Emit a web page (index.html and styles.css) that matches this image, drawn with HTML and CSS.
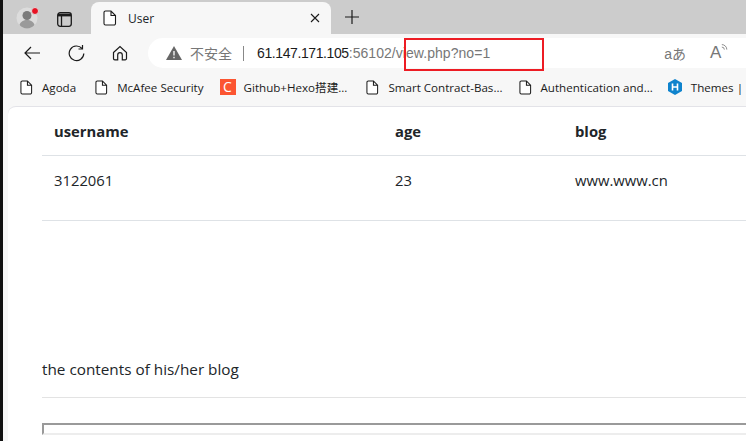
FILE: index.html
```html
<!DOCTYPE html>
<html lang="zh-cn">
<head>
    <meta charset="UTF-8">
    <title>User</title>
    <link rel="stylesheet" href="styles.css">
</head>
<body>
    <div class="browser">
        <div class="tabstrip">
            <div class="profile">
                <svg width="22" height="22" viewBox="0 0 22 22"><circle cx="11" cy="11" r="10.500" fill="#dcdcdc"/><circle cx="11" cy="8.500" r="4.500" fill="#7b7b7b"/><path d="M3.500 18c1-3.500 4-5 7.500-5s6.500 1.500 7.500 5c-2 2.300-4.500 3.500-7.500 3.500S5.500 20.300 3.500 18z" fill="#9a9a9a"/></svg>
                <span class="profile-dot"></span>
            </div>
            <div class="tab-actions">
                <svg width="15" height="15" viewBox="0 0 15 15" fill="none" stroke="#1b1b1b" stroke-width="1.300"><rect x="0.700" y="0.700" width="13.600" height="13.600" rx="2.500"/><path d="M1 3h13" stroke-width="2.800"/><path d="M4.500 3v11"/></svg>
            </div>
            <div class="tab">
                <svg class="page-icon" width="14" height="16" viewBox="0 0 14 16"><path d="M2.500 1h5.500l4.500 4.500v8a1.500 1.500 0 0 1-1.500 1.500h-8.500a1.500 1.500 0 0 1-1.500-1.500v-11a1.500 1.500 0 0 1 1.500-1.500zM8 1v4.500h4.500" fill="#fff" stroke="#1b1b1b" stroke-width="1.100"/></svg>
                <span class="tab-title">User</span>
                <svg class="tab-close" width="10" height="10" viewBox="0 0 10 10"><path d="M1 1l8 8M9 1l-8 8" stroke="#1b1b1b" stroke-width="1.100"/></svg>
            </div>
            <svg class="new-tab" width="14" height="14" viewBox="0 0 14 14"><path d="M7 0v14M0 7h14" stroke="#1b1b1b" stroke-width="1.200"/></svg>
        </div>

        <div class="toolbar">
            <svg class="nav-back" width="16" height="14" viewBox="0 0 16 14" fill="none" stroke="#1b1b1b" stroke-width="1.200"><path d="M16 7H1M7 1L1 7l6 6"/></svg>
            <svg class="nav-reload" width="17" height="17" viewBox="0 0 17 17" fill="none" stroke="#1b1b1b" stroke-width="1.200"><path d="M14 3.500A7.300 7.300 0 1 0 15.800 8.500"/><path d="M10.500 4h4V0"/></svg>
            <svg class="nav-home" width="16" height="16" viewBox="0 0 16 16" fill="none" stroke="#1b1b1b" stroke-width="1.200"><path d="M1.500 7.500L8 1.500l6.500 6v6a1.300 1.300 0 0 1-1.300 1.300H10.300V10a2.300 2.300 0 0 0-4.600 0v4.800H2.800a1.300 1.300 0 0 1-1.300-1.300z"/></svg>
            <div class="address">
                <svg class="warn" width="16" height="14" viewBox="0 0 16 14"><path d="M8 0l8 14H0z" fill="#666"/><path d="M8 5v4.500M8 10.700v1.500" stroke="#fff" stroke-width="1.300"/></svg>
                <span class="insecure">不安全</span>
                <span class="divider"></span>
                <span class="url"><span class="host">61.147.171.105</span>:56102/view.php?no=1</span>
                <span class="addr-right">
                    <span class="translate">aあ</span>
                    <span class="read">A<svg width="7" height="9" viewBox="0 0 8 9" fill="none" stroke="#777" stroke-width="1"><path d="M1 4a3 3 0 0 1 3 3M1 1a6 6 0 0 1 6 6"/></svg></span>
                </span>
            </div>
        </div>

        <div class="bookmarks">
            <div class="bookmark b1"><svg class="page-icon" width="13" height="15" viewBox="0 0 14 16"><path d="M2.500 1h5.500l4.500 4.500v8a1.500 1.500 0 0 1-1.500 1.500h-8.500a1.500 1.500 0 0 1-1.500-1.500v-11a1.500 1.500 0 0 1 1.500-1.500zM8 1v4.500h4.500" fill="#fff" stroke="#1b1b1b" stroke-width="1.100"/></svg>Agoda</div>
            <div class="bookmark b2"><svg class="page-icon" width="13" height="15" viewBox="0 0 14 16"><path d="M2.500 1h5.500l4.500 4.500v8a1.500 1.500 0 0 1-1.500 1.500h-8.500a1.500 1.500 0 0 1-1.500-1.500v-11a1.500 1.500 0 0 1 1.500-1.500zM8 1v4.500h4.500" fill="#fff" stroke="#1b1b1b" stroke-width="1.100"/></svg>McAfee Security</div>
            <div class="bookmark b3"><span class="csdn">C</span>Github+Hexo搭建...</div>
            <div class="bookmark b4"><svg class="page-icon" width="13" height="15" viewBox="0 0 14 16"><path d="M2.500 1h5.500l4.500 4.500v8a1.500 1.500 0 0 1-1.500 1.500h-8.500a1.500 1.500 0 0 1-1.500-1.500v-11a1.500 1.500 0 0 1 1.500-1.500zM8 1v4.500h4.500" fill="#fff" stroke="#1b1b1b" stroke-width="1.100"/></svg>Smart Contract-Bas...</div>
            <div class="bookmark b5"><svg class="page-icon" width="13" height="15" viewBox="0 0 14 16"><path d="M2.500 1h5.500l4.500 4.500v8a1.500 1.500 0 0 1-1.500 1.500h-8.500a1.500 1.500 0 0 1-1.500-1.500v-11a1.500 1.500 0 0 1 1.500-1.500zM8 1v4.500h4.500" fill="#fff" stroke="#1b1b1b" stroke-width="1.100"/></svg>Authentication and...</div>
            <div class="bookmark b6"><svg class="hexo" width="14" height="16" viewBox="0 0 14 16"><path d="M7 0l7 4v8l-7 4-7-4V4z" fill="#0e83cd"/><path d="M4.500 4.500v7M9.500 4.500v7M4.500 8h5" stroke="#fff" stroke-width="1.600" fill="none"/></svg>Themes | Hexo</div>
        </div>

        <div class="page">
            <div class="users">
                <div class="row head">
                    <div>username</div>
                    <div>age</div>
                    <div>blog</div>
                </div>
                <div class="row body-row">
                    <div>3122061</div>
                    <div>23</div>
                    <div>www.www.cn</div>
                </div>
            </div>
            <p class="contents">the contents of his/her blog</p>
            <div class="frame"></div>
        </div>

        <div class="highlight"></div>
    </div>
</body>
</html>
```

FILE: styles.css
```css
html, body {
    margin: 0;
    height: 100%;
    overflow: hidden;
}
body {
    font-family: "Open Sans", "Noto Sans CJK SC", sans-serif;
    color: #212529;
    background: #000;
}
.browser {
    position: relative;
    width: 746px;
    height: 441px;
    overflow: hidden;
    border-left: 3px solid #111;
    box-sizing: border-box;
    background: #f7f7f7;
}
.tabstrip {
    height: 34px;
    background: #cccccc;
    display: flex;
    align-items: flex-end;
}
.profile {
    position: relative;
    width: 22px;
    height: 22px;
    margin: 0 0 5px 13px;
}
.profile-dot {
    position: absolute;
    top: 0;
    right: -1px;
    width: 6px;
    height: 6px;
    border-radius: 50%;
    background: #e81123;
    border: 1px solid #ddd;
}
.tab-actions {
    margin: 0 0 9px 19px;
    height: 15px;
}
.tab {
    width: 240px;
    height: 32px;
    margin-left: 19px;
    background: #f7f7f7;
    border-radius: 8px 8px 0 0;
    display: flex;
    align-items: center;
    box-sizing: border-box;
    padding: 0 11px 0 12px;
    font-size: 12px;
}
.tab-title {
    margin-left: 11px;
    flex: 1;
}
.new-tab {
    margin: 0 0 10px 14px;
}
.toolbar {
    height: 34px;
    display: flex;
    align-items: center;
    box-sizing: border-box;
    padding-top: 4px;
}
.nav-back {
    margin-left: 21px;
}
.nav-reload {
    margin-left: 28px;
}
.nav-home {
    margin-left: 27px;
}
.address {
    margin-left: 20px;
    flex: 1;
    height: 30px;
    background: #fff;
    border-radius: 15px 0 0 15px;
    display: flex;
    align-items: center;
    padding-left: 18px;
    font-family: "Liberation Sans", "Noto Sans CJK SC", sans-serif;
    font-size: 14px;
    color: #777;
}
.insecure {
    margin-left: 8px;
    font-size: 14px;
}
.divider {
    width: 1px;
    height: 15px;
    background: #888;
    margin: 0 13px 0 11px;
}
.url {
    font-size: 14px;
    letter-spacing: 0.050px;
}
.host {
    color: #1b1b1b;
    letter-spacing: -0.400px;
}
.addr-right {
    margin-left: auto;
    display: flex;
    align-items: center;
    color: #777;
}
.translate {
    font-size: 14px;
    margin-right: 24px;
}
.read {
    font-size: 17px;
    display: flex;
    margin-right: 18px;
    width: 18px;
}
.bookmarks {
    height: 38px;
    display: flex;
    align-items: center;
    font-size: 11.600px;
    color: #1b1b1b;
    white-space: nowrap;
    padding-left: 17px;
}
.bookmark {
    display: flex;
    align-items: center;
    flex-shrink: 0;
}
.bookmark .page-icon, .bookmark .hexo {
    margin-right: 9px;
}
.b2 {
    margin-left: 19px;
}
.b3 {
    margin-left: 16px;
}
.b4 {
    margin-left: 19px;
}
.b5 {
    margin-left: 16px;
}
.b6 {
    margin-left: 15px;
}
.csdn {
    width: 16px;
    height: 16px;
    background: #fc5531;
    color: #fff;
    font-size: 14px;
    line-height: 16px;
    text-align: center;
    margin-right: 8px;
}
.page {
    height: 336px;
    margin-left: 5px;
    background: #fff;
    border-top-left-radius: 8px;
    border-top: 1px solid #e3e3e8;
    box-sizing: border-box;
    padding-left: 34px;
    font-size: 15px;
}
.row {
    display: grid;
    grid-template-columns: 341px 180px 1fr;
    padding-left: 12px;
    border-bottom: 1px solid #dee2e6;
}
.head {
    height: 48px;
    align-items: center;
    font-size: 14.800px;
    font-weight: 700;
}
.body-row {
    height: 65px;
    padding-top: 14px;
    box-sizing: border-box;
    font-size: 14.800px;
}
.contents {
    margin: 138px 0 0;
    padding-bottom: 18px;
    border-bottom: 1px solid #e3e3e3;
    line-height: 20px;
    font-size: 15.300px;
}
.frame {
    margin-top: 25px;
    height: 8px;
    border: 2px solid #ededed;
    border-top-color: #9a9a9a;
    border-left-color: #9a9a9a;
    border-right: 0;
}
.highlight {
    position: absolute;
    left: 401px;
    top: 38px;
    width: 140px;
    height: 33px;
    box-sizing: border-box;
    border: 2px solid #ed1c24;
}
```
